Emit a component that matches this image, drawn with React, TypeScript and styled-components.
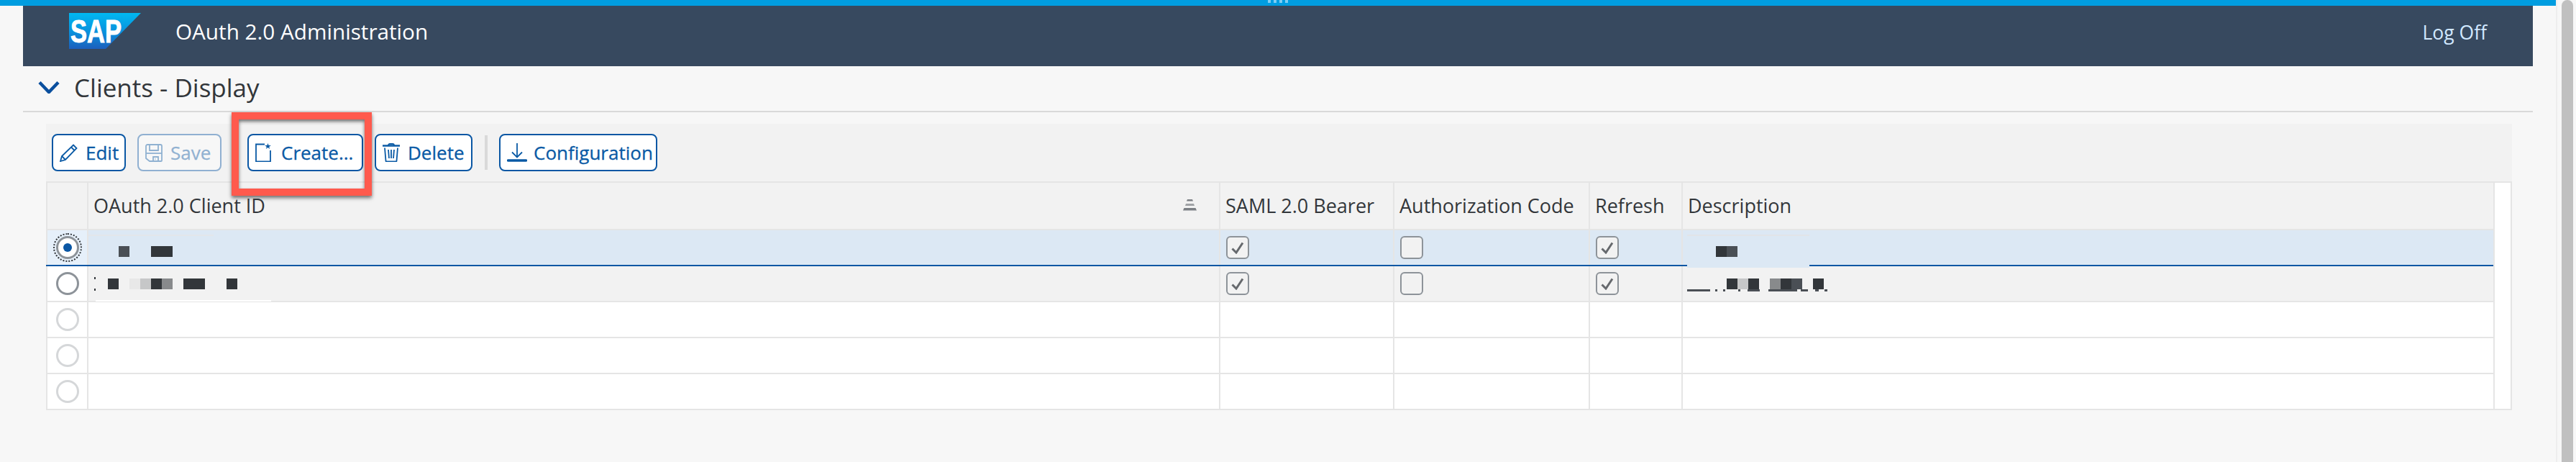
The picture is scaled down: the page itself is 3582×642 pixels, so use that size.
import React from 'react'
import styled, { createGlobalStyle } from 'styled-components'

const FONT = '"Open Sans", "Noto Sans", Arial, sans-serif'

const GlobalStyle = createGlobalStyle`
  html, body {
    margin: 0;
    padding: 0;
    background: #f7f7f7;
  }
  body {
    font-family: ${FONT};
  }
`

interface IBlock {
  w: number
  shade?: string
  gap?: number
}

const DARK = '#32363a'
const SOFT = '#4a4f55'
const GREY = '#888a8c'
const PALE = '#c6c7c8'
const FAINT = '#e8e8e8'

const idBlocksTop: IBlock[] = [
  { w: 15, shade: SOFT, gap: 30 },
  { w: 30, shade: DARK },
]

const idBlocksBottom: IBlock[] = [
  { w: 15, shade: DARK, gap: 15 },
  { w: 15, shade: FAINT },
  { w: 15, shade: PALE },
  { w: 15, shade: DARK },
  { w: 15, shade: GREY, gap: 15 },
  { w: 30, shade: DARK, gap: 30 },
  { w: 15, shade: DARK },
]

const descBlocksTop: IBlock[] = [
  { w: 15, shade: DARK },
  { w: 15, shade: SOFT },
]

const descBlocksBottom: IBlock[] = [
  { w: 15, shade: DARK },
  { w: 15, shade: PALE },
  { w: 15, shade: DARK, gap: 15 },
  { w: 15, shade: GREY },
  { w: 15, shade: DARK },
  { w: 15, shade: SOFT, gap: 15 },
  { w: 15, shade: DARK },
]

// bottoms of the letters that stick out under the blur
const descTicks: IBlock[] = [
  { w: 32, gap: 7 },
  { w: 3, gap: 8 },
  { w: 3, gap: 18 },
  { w: 3, gap: 10 },
  { w: 17, gap: 12 },
  { w: 40, gap: 5 },
  { w: 10, gap: 10 },
  { w: 5, gap: 8 },
  { w: 4 },
]

const Blocks = ({ items, start, drop }: { items: IBlock[]; start: number; drop: number }) => {
  return (
    <BlockRow $start={start} $drop={drop}>
      {items.map((b, i) => (
        <Block key={i} $w={b.w} $shade={b.shade ?? DARK} $gap={b.gap} />
      ))}
    </BlockRow>
  )
}

const SapLogo = () => (
  <LogoSvg viewBox="0 0 100 50">
    <defs>
      <linearGradient id="sapBlue" x1="0" y1="0" x2="0" y2="1">
        <stop offset="0" stopColor="#00b8f1" />
        <stop offset="0.55" stopColor="#0a8fdc" />
        <stop offset="1" stopColor="#1c5fbc" />
      </linearGradient>
    </defs>
    <path d="M0 0H100L51 50H0Z" fill="url(#sapBlue)" />
    <text
      x="2"
      y="41"
      fill="#fff"
      stroke="#fff"
      strokeWidth="1"
      fontFamily='"Liberation Sans", Arial, sans-serif'
      fontWeight="700"
      fontSize="44"
      textLength="71"
      lengthAdjust="spacingAndGlyphs"
    >
      SAP
    </text>
  </LogoSvg>
)

const PencilIcon = () => (
  <Icon viewBox="0 0 25 25" width="25" height="25">
    <path d="M19 1.500l4.500 4.500L8 22 1 24l2-7z" />
    <path d="M16 4.500l4.500 4.500" />
    <path d="M3 17l5 5" />
  </Icon>
)

const SaveIcon = () => (
  <Icon viewBox="0 0 24 25" width="24" height="25">
    <path d="M3 1h18a2 2 0 0 1 2 2v20a1 1 0 0 1-1 1H6l-5-4V3a2 2 0 0 1 2-2z" />
    <path d="M6 1v8h12V1" />
    <path d="M1 13h22" />
    <path d="M11 24v-6h7v6" />
    <path d="M14 20.500v1" />
  </Icon>
)

const CreateIcon = () => (
  <Icon viewBox="0 0 22 26" width="22" height="26">
    <path d="M13 1.500H1v24h20V10" />
    <path
      d="M17.500 0l1.100 3h3.200l-2.600 1.900 1 3.100-2.700-1.900-2.700 1.900 1-3.100L13.200 3h3.200z"
      fill="#0a5aa5"
      stroke="none"
    />
  </Icon>
)

const TrashIcon = () => (
  <Icon viewBox="0 0 24 26" width="24" height="26">
    <path d="M8 3c0-1.500 1-2 2-2h4c1 0 2 .5 2 2" />
    <path d="M0 3.500h24" strokeWidth="2.500" />
    <path d="M3 6.500l1.500 18c0 .5.500 1 1 1h13c.5 0 1-.5 1-1l1.500-18" />
    <path d="M8 9l1 12M12 9v12M16 9l-1 12" />
  </Icon>
)

const DownloadIcon = () => (
  <Icon viewBox="0 0 28 26" width="28" height="26">
    <path d="M14 0v19" />
    <path d="M7 12.500l7 7 7-7" />
    <path d="M1.500 24h25" strokeWidth="3.500" strokeLinecap="round" />
  </Icon>
)

const Check = () => (
  <CheckSvg viewBox="0 0 18 17">
    <path d="M1.500 9.500L7 15 16 1.500" />
  </CheckSvg>
)

const SortIcon = () => (
  <SortSvg viewBox="0 0 23 16">
    <path d="M8 0h7l1 2.500H7z" />
    <path d="M6 6h11l1 3H5z" fill="#a0a3a6" />
    <path d="M3.500 12H19.500l1.500 3.500H2z" />
  </SortSvg>
)

const rows = [
  { selected: true, idBlocks: idBlocksTop, descBlocks: descBlocksTop },
  { selected: false, idBlocks: idBlocksBottom, descBlocks: descBlocksBottom },
  { selected: false, empty: true },
  { selected: false, empty: true },
  { selected: false, empty: true },
]

export default function App() {
  return (
    <Page>
      <GlobalStyle />
      <Main>
        <TopLine>
          <GripDot />
          <GripDot />
          <GripDot />
          <GripDot />
        </TopLine>
        <Content>
          <Header>
            <Brand>
              <SapLogo />
              <AppTitle>OAuth 2.0 Administration</AppTitle>
            </Brand>
            <LogOff>Log Off</LogOff>
          </Header>
          <SectionHead>
            <Chevron viewBox="0 0 30 17">
              <path d="M2 1.500L15 15 28 1.500" />
            </Chevron>
            <SectionTitle>Clients - Display</SectionTitle>
          </SectionHead>
          <Panel>
            <Toolbar>
              <Button $width={103}>
                <PencilIcon />
                Edit
              </Button>
              <Button $width={117} $disabled>
                <SaveIcon />
                Save
              </Button>
              <CreateButton $width={161} $gap={14}>
                <CreateIcon />
                Create...
                <Highlight />
              </CreateButton>
              <Button $width={136}>
                <TrashIcon />
                Delete
              </Button>
              <Separator />
              <Button $width={220} $gap={9}>
                <DownloadIcon />
                Configuration
              </Button>
            </Toolbar>
            <Table>
              <TableBody>
                <HeadRow>
                  <SelectorCell $head />
                  <HeadCell>
                    OAuth 2.0 Client ID
                    <SortIcon />
                  </HeadCell>
                  <HeadCell>SAML 2.0 Bearer</HeadCell>
                  <HeadCell>Authorization Code</HeadCell>
                  <HeadCell>Refresh</HeadCell>
                  <HeadCell>Description</HeadCell>
                </HeadRow>
                {rows.map((r, i) => (
                  <Row key={i} $selected={r.selected} $empty={r.empty}>
                    <SelectorCell $selected={r.selected}>
                      <Radio $selected={r.selected} $empty={r.empty} />
                    </SelectorCell>
                    <Cell>
                      {r.idBlocks && (
                        <>
                          {!r.selected && (
                            <>
                              <IdTick $top={15} />
                              <IdTick $top={31} />
                            </>
                          )}
                          <Blocks items={r.idBlocks} start={r.selected ? 44 : 29} drop={r.selected ? 10 : 1} />
                          <Smudge
                            $left={r.selected ? 0 : 10}
                            $w={r.selected ? 174 : 244}
                            $top={r.selected ? 6 : 47}
                            $color={r.selected ? '#e3e6ea' : '#fff'}
                          />
                        </>
                      )}
                    </Cell>
                    <Cell>
                      {!r.empty && (
                        <CheckBox>
                          <Check />
                        </CheckBox>
                      )}
                    </Cell>
                    <Cell>{!r.empty && <CheckBox />}</Cell>
                    <Cell>
                      {!r.empty && (
                        <CheckBox>
                          <Check />
                        </CheckBox>
                      )}
                    </Cell>
                    <Cell>
                      {r.descBlocks && (
                        <>
                          {r.selected ? (
                            <DescPatch />
                          ) : (
                            <DescTicks>
                              {descTicks.map((t, j) => (
                                <Tick key={j} $w={t.w} $gap={t.gap} />
                              ))}
                            </DescTicks>
                          )}
                          <Blocks items={r.descBlocks} start={r.selected ? 48 : 63} drop={r.selected ? 10 : 1} />
                        </>
                      )}
                    </Cell>
                  </Row>
                ))}
              </TableBody>
              <Filler />
            </Table>
          </Panel>
        </Content>
      </Main>
      <Track>
        <Thumb />
      </Track>
    </Page>
  )
}

const Page = styled.div`
  display: flex;
  width: 3582px;
  height: 642px;
  overflow: hidden;
  background: #f7f7f7;
`

const Main = styled.div`
  width: 3554px;
  display: flex;
  flex-direction: column;
`

const TopLine = styled.div`
  height: 8px;
  background: #009de0;
  display: flex;
  justify-content: center;
  gap: 4px;
`

const GripDot = styled.span`
  width: 4px;
  height: 4px;
  background: #7fcdf3;
`

const Content = styled.div`
  padding: 0 32px;
`

const Header = styled.header`
  height: 84px;
  background: #37495f;
  display: flex;
  align-items: center;
  justify-content: space-between;
  padding: 0 64px;
`

const Brand = styled.div`
  display: flex;
  align-items: center;
  gap: 48px;
`

const LogoSvg = styled.svg`
  width: 100px;
  height: 50px;
  display: block;
  margin-top: -14px;
`

const AppTitle = styled.div`
  font-size: 29.7px;
  line-height: 36px;
  color: #fff;
  margin-top: -13px;
`

const LogOff = styled.div`
  font-size: 26.5px;
  line-height: 36px;
  color: #d1e8ff;
  margin-top: -11px;
`

const SectionHead = styled.div`
  height: 62px;
  display: flex;
  align-items: center;
  gap: 20px;
  padding-left: 21px;
  border-bottom: 2px solid #d9d9d9;
`

const Chevron = styled.svg`
  width: 30px;
  height: 17px;
  fill: none;
  stroke: #0a4f9e;
  stroke-width: 4.500;
  margin-top: -4px;
`

const SectionTitle = styled.h2`
  margin: -3px 0 0;
  font-size: 35px;
  font-weight: 400;
  color: #32363a;
  line-height: 44px;
`

const Panel = styled.section`
  margin: 16px 0 0 32px;
  width: 3429px;
`

const Toolbar = styled.div`
  height: 82px;
  padding: 14px 8px;
  box-sizing: border-box;
  background: #f2f2f2;
  border-bottom: 2px solid #e5e5e5;
  display: flex;
  align-items: flex-start;
  gap: 16px;
`

const Button = styled.button<{ $width: number; $gap?: number; $disabled?: boolean }>`
  position: relative;
  width: ${props => props.$width}px;
  height: 52px;
  padding: 0 0 0 9px;
  display: flex;
  align-items: center;
  gap: ${props => props.$gap ?? 11}px;
  box-sizing: border-box;
  border: 2px solid #0a57a4;
  border-radius: 8px;
  background: #fff;
  color: #0a5aa5;
  font-family: ${FONT};
  font-size: 26px;
  line-height: 1;
  white-space: nowrap;
  -webkit-text-stroke: 0.3px currentColor;
  opacity: ${props => (props.$disabled ? 0.42 : 1)};
`

const CreateButton = styled(Button)`
  margin-left: 20px;
`

const Icon = styled.svg`
  fill: none;
  stroke: #0a5aa5;
  stroke-width: 1.800;
  flex: none;
`

const Highlight = styled.span`
  position: absolute;
  left: -24px;
  right: -14px;
  top: -32px;
  bottom: -36px;
  border: 10px solid #ff5a4d;
  box-shadow: 0 3px 5px rgba(0, 0, 0, 0.55), inset 0 3px 5px rgba(0, 0, 0, 0.55);
  pointer-events: none;
`

const Separator = styled.div`
  width: 4px;
  height: 48px;
  margin: 2px 0 0 1px;
  background: #d9d9d9;
`

const Table = styled.div`
  display: flex;
`

const TableBody = styled.div`
  width: 3403px;
  display: flex;
  flex-direction: column;
`

const Filler = styled.div`
  flex: 1;
  box-sizing: border-box;
  background: #fff;
  border: 2px solid #e5e5e5;
  border-top: 0;
`

const GRID = '57px 1574px 242px 272px 129px 1129px'

const HeadRow = styled.div`
  display: grid;
  grid-template-columns: ${GRID};
  height: 66px;
  box-sizing: border-box;
  background: #f2f2f2;
  border-bottom: 2px solid #e5e5e5;
`

const Row = styled.div<{ $selected?: boolean; $empty?: boolean }>`
  display: grid;
  grid-template-columns: ${GRID};
  height: 50px;
  box-sizing: border-box;
  background: ${props => (props.$empty ? '#fff' : props.$selected ? '#dce8f4' : '#f2f2f2')};
  border-bottom: 2px solid ${props => (props.$selected ? '#0a57a4' : '#e5e5e5')};
`

const BaseCell = styled.div`
  position: relative;
  box-sizing: border-box;
  border-left: 2px solid #e5e5e5;
  display: flex;
  align-items: center;
  min-width: 0;
`

const SelectorCell = styled(BaseCell)<{ $head?: boolean; $selected?: boolean }>`
  justify-content: center;
  background: ${props => (props.$head ? '#f2f2f2' : props.$selected ? '#e6f0fa' : '#fff')};
`

const HeadCell = styled(BaseCell)`
  padding: 0 7px 2px;
  justify-content: space-between;
  font-size: 27px;
  color: #32363a;
  white-space: nowrap;
`

const Cell = styled(BaseCell)`
  padding-left: 8px;
`

const Radio = styled.span<{ $selected?: boolean; $empty?: boolean }>`
  position: relative;
  width: 32px;
  height: 32px;
  box-sizing: border-box;
  border-radius: 50%;
  border: 3px solid ${props => (props.$empty ? '#d5d7d9' : '#8d9399')};
  background: #fff;
  ${props =>
    props.$selected &&
    `
    outline: 2px dotted #32363a;
    outline-offset: 2px;
    &::after {
      content: '';
      position: absolute;
      inset: 7px;
      border-radius: 50%;
      background: #0a57a4;
    }
  `}
`

const CheckBox = styled.span`
  width: 32px;
  height: 32px;
  box-sizing: border-box;
  border: 2.500px solid #8d9399;
  border-radius: 6px;
  background: #f2f2f2;
  display: flex;
  align-items: center;
  justify-content: center;
`

const CheckSvg = styled.svg`
  width: 18px;
  height: 17px;
  fill: none;
  stroke: #66696d;
  stroke-width: 3;
`

const SortSvg = styled.svg`
  width: 23px;
  height: 16px;
  fill: #7c8085;
  margin-right: 22px;
`

const BlockRow = styled.div<{ $start: number; $drop: number }>`
  position: relative;
  display: flex;
  margin-left: ${props => props.$start - 10}px;
  margin-top: ${props => props.$drop}px;
`

const Block = styled.span<{ $w: number; $shade: string; $gap?: number }>`
  width: ${props => props.$w}px;
  height: 15px;
  background: ${props => props.$shade};
  margin-right: ${props => props.$gap ?? 0}px;
`

const Smudge = styled.span<{ $left: number; $w: number; $top: number; $color: string }>`
  position: absolute;
  left: ${props => props.$left}px;
  top: ${props => props.$top}px;
  width: ${props => props.$w}px;
  height: 2px;
  background: ${props => props.$color};
`

const IdTick = styled.span<{ $top: number }>`
  position: absolute;
  left: 8px;
  top: ${props => props.$top}px;
  width: 2px;
  height: 3px;
  background: ${DARK};
`

const DescPatch = styled.span`
  position: absolute;
  left: 6px;
  top: 6px;
  width: 170px;
  height: 46px;
  box-sizing: border-box;
  border-top: 2px solid #e2e4e8;
  background: #dce8f4;
`

const DescTicks = styled.span`
  position: absolute;
  left: 6px;
  top: 32px;
  display: flex;
`

const Tick = styled.span<{ $w: number; $gap?: number }>`
  width: ${props => props.$w}px;
  height: 3px;
  background: #4a4f55;
  margin-right: ${props => props.$gap ?? 0}px;
`

const Track = styled.div`
  flex: 1;
  border-left: 2px solid #eeeeee;
  padding-left: 6px;
`

const Thumb = styled.div`
  width: 16px;
  height: 642px;
  background: #c0c0c0;
  border-radius: 8px 8px 0 0;
`
